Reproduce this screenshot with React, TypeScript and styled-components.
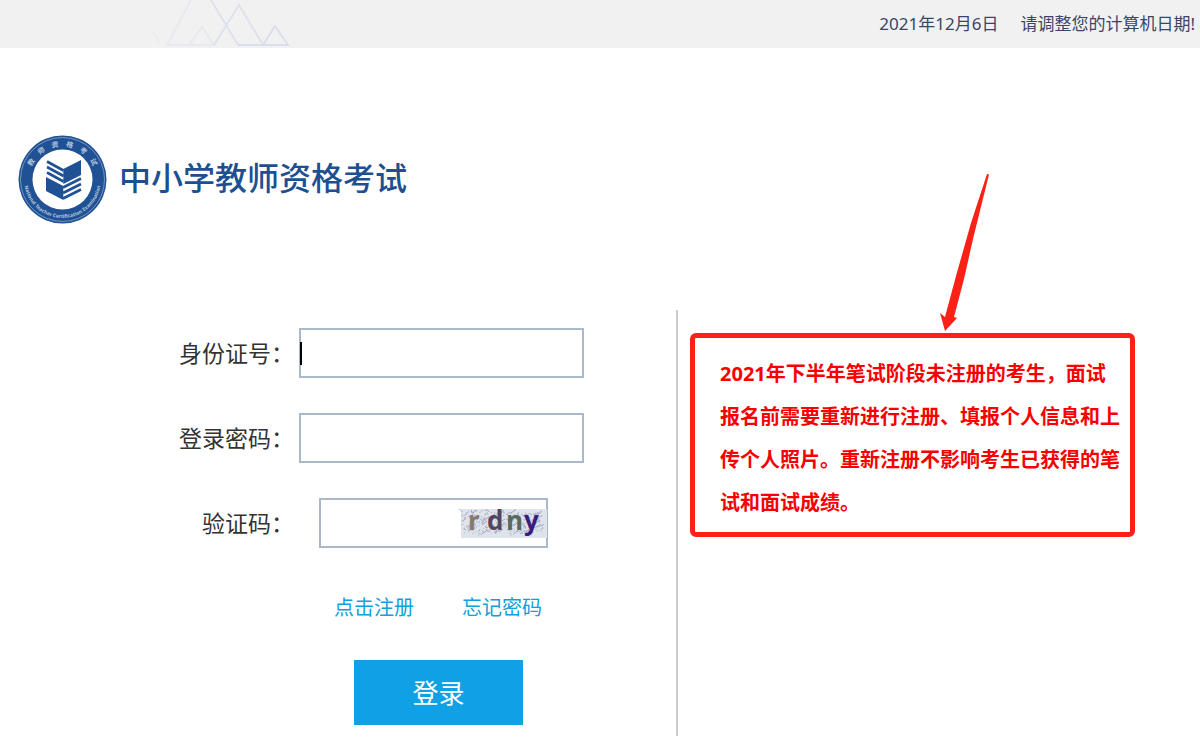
import React from "react";
import styled, { createGlobalStyle } from "styled-components";

const GlobalStyle = createGlobalStyle`
  * { box-sizing: border-box; }
  body {
    margin: 0;
    background: #fff;
    color: #333;
    font-family: "Noto Sans", "Noto Sans CJK SC", sans-serif;
  }
`;

const TopBar = styled.header`
  display: flex;
  justify-content: space-between;
  height: 48px;
  padding: 0 5px 0 150px;
  background: #f1f1f1;
`;

const DateInfo = styled.p`
  display: flex;
  gap: 22px;
  margin: 0;
  font-size: 17px;
  line-height: 48px;
  color: #3b4566;
  white-space: nowrap;
`;

const Brand = styled.div`
  display: flex;
  align-items: center;
  gap: 12px;
  padding: 87px 18px 86px;
`;

const BrandName = styled.h1`
  margin: 0;
  padding-bottom: 4px;
  font-size: 32px;
  line-height: 48px;
  font-weight: 500;
  color: #1d4f91;
`;

const Content = styled.main`
  display: grid;
  grid-template-columns: 678fr 522fr;
  margin-bottom: 20px;
`;

const LoginForm = styled.form`
  display: flex;
  flex-direction: column;
  padding: 18px 0 11px 120px;
  border-right: 2px solid #ccc;
`;

const Fields = styled.div`
  display: flex;
  flex-direction: column;
  gap: 35px;
`;

const FieldRow = styled.div`
  display: grid;
  grid-template-columns: 174px 1fr;
  column-gap: 5px;
  align-items: center;
`;

const Label = styled.label`
  text-align: right;
  font-size: 23px;
  line-height: 50px;
`;

const InputWrap = styled.div<{ $short?: boolean }>`
  position: relative;
  width: ${(p) => (p.$short ? 229 : 285)}px;
  margin-left: ${(p) => (p.$short ? 20 : 0)}px;
`;

const Input = styled.input`
  display: block;
  width: 100%;
  height: 50px;
  padding: 0 8px;
  border: 2px solid #aab8cb;
  border-radius: 0;
  background: #fff;
  font: inherit;
  font-size: 20px;
  outline: none;
`;

const Caret = styled.span`
  position: absolute;
  left: 1px;
  top: 14px;
  width: 2px;
  height: 23px;
  background: #000;
`;

const CaptchaImage = styled.svg`
  position: absolute;
  right: 1px;
  top: 11px;
  overflow: visible;
`;

const Links = styled.nav`
  display: flex;
  gap: 48px;
  margin: 45px 0 37px 214px;
`;

const TextLink = styled.a`
  font-size: 20px;
  line-height: 30px;
  color: #10a0dc;
  text-decoration: none;
`;

const SubmitButton = styled.button`
  width: 169px;
  height: 65px;
  margin-left: 234px;
  padding: 0 0 2px;
  border: 0;
  background: #0fa1e3;
  color: #fff;
  font: inherit;
  font-size: 26px;
  cursor: pointer;
`;

const NoticeArea = styled.aside`
  padding: 23px 12px 0;
`;

const Notice = styled.div`
  position: relative;
  max-width: 445px;
  padding: 14px 8px 8px 25px;
  border: 5px solid #fb2116;
  border-radius: 6px;
`;

const NoticeText = styled.p`
  margin: 0;
  font-size: 20px;
  line-height: 43px;
  font-weight: 700;
  color: #f80000;
`;

const Arrow = styled.svg`
  position: absolute;
  left: 242px;
  bottom: 100%;
  margin-bottom: 7px;
`;

const Mountains = () => (
  <svg width="150" height="48" viewBox="0 0 150 48" fill="none" strokeWidth="2" aria-hidden="true">
    <path d="M3 32 9 42" stroke="#ebecef" />
    <path d="M41 0 17 45H64L52 27 39 45" stroke="#e7e9ee" />
    <path d="M61 0 88 45M64 45 89 5 113 45" stroke="#dfe2eb" />
    <path d="M88 45H138L125 26 113 45" stroke="#dadfec" />
  </svg>
);

const Emblem = () => (
  <svg width="89" height="89" viewBox="0 0 89 89" role="img" aria-label="中小学教师资格考试">
    <defs>
      <path id="ringTop" d="M11.500 44.500A33 33 0 0 1 77.500 44.500" />
      <path id="ringBottom" d="M6 44.500A38.500 38.500 0 0 0 83 44.500" />
    </defs>
    <circle cx="44.500" cy="44.500" r="44" fill="#1f5194" />
    <circle cx="44.500" cy="44.500" r="42" fill="none" stroke="#8ba6cb" strokeWidth="0.800" />
    <circle cx="44.500" cy="44.500" r="30" fill="#fff" />
    <text fontSize="7" fontWeight="700" fill="#b4c6df" textAnchor="middle" letterSpacing="7">
      <textPath href="#ringTop" startOffset="53%">教师资格考试</textPath>
    </text>
    <text fontSize="5" fontWeight="700" fill="#b4c6df" textAnchor="middle">
      <textPath href="#ringBottom" startOffset="50%">National Teacher Certification Examination</textPath>
    </text>
    <path d="M45.300 34 63 25V40L45.300 49Z" fill="#1f5194" />
    <path d="M28 42 45.300 51V65L28 56Z" fill="#1f5194" />
    <path
      d="M29 26.500 45.500 35.500M29 32 45.500 41M29 37.500 45.500 46.500"
      stroke="#1f5194"
      strokeWidth="2.600"
    />
    <path
      d="M45 52.500 63 43.500M45 58 63 49M45 63.500 63 54.500"
      stroke="#1f5194"
      strokeWidth="2.600"
    />
  </svg>
);

const noiseColors = ["#a9b0cf", "#b9c8cd", "#c5bfd6", "#9facc4", "#bccfbf", "#a59fc4"];
const noise = Array.from({ length: 170 }, (_, i) => {
  const x = 2 + ((i * 37) % 80);
  const y = 3 + ((i * 19 + Math.floor(i / 7) * 5) % 22);
  const dx = ((i * 13) % 11) - 5;
  const dy = ((i * 7) % 9) - 4;
  return { d: `M${x} ${y}q${dx} ${dy} ${dy} ${dx / 2}`, color: noiseColors[i % 6] };
});

const Captcha = () => (
  <CaptchaImage width="86" height="29" viewBox="0 0 86 29" role="img" aria-label="验证码图片">
    <rect width="86" height="29" fill="#dfe4ec" />
    {noise.map((n, i) => (
      <path key={i} d={n.d} stroke={n.color} fill="none" />
    ))}
    <g fontFamily="Open Sans, sans-serif" fontSize="26" fontWeight="700">
      <text x="7" y="21" fill="#85796e">r</text>
      <text x="26" y="21" fill="#56445c">d</text>
      <text x="45" y="21" fill="#58695f">n</text>
      <text x="63" y="21" fill="#3b1b80">y</text>
    </g>
  </CaptchaImage>
);

export default function App() {
  return (
    <>
      <GlobalStyle />
      <TopBar>
        <Mountains />
        <DateInfo>
          <span>2021年12月6日</span>
          <span>请调整您的计算机日期!</span>
        </DateInfo>
      </TopBar>
      <Brand>
        <Emblem />
        <BrandName>中小学教师资格考试</BrandName>
      </Brand>
      <Content>
        <LoginForm onSubmit={(e) => e.preventDefault()}>
          <Fields>
            <FieldRow>
              <Label htmlFor="idNumber">身份证号：</Label>
              <InputWrap>
                <Input id="idNumber" type="text" />
                <Caret />
              </InputWrap>
            </FieldRow>
            <FieldRow>
              <Label htmlFor="password">登录密码：</Label>
              <InputWrap>
                <Input id="password" type="password" />
              </InputWrap>
            </FieldRow>
            <FieldRow>
              <Label htmlFor="captcha">验证码：</Label>
              <InputWrap $short>
                <Input id="captcha" type="text" />
                <Captcha />
              </InputWrap>
            </FieldRow>
          </Fields>
          <Links>
            <TextLink href="#register">点击注册</TextLink>
            <TextLink href="#forgot">忘记密码</TextLink>
          </Links>
          <SubmitButton type="submit">登录</SubmitButton>
        </LoginForm>
        <NoticeArea>
          <Notice>
            <Arrow width="53" height="160" viewBox="0 0 53 160" aria-hidden="true">
              <path
                d="M50 3 52 3.500 36 68 27 108 17 146 20 147 8 160 3 142 8 146 19 105 34 52Z"
                fill="#fb2116"
              />
            </Arrow>
            <NoticeText>
              2021年下半年笔试阶段未注册的考生，面试报名前需要重新进行注册、填报个人信息和上传个人照片。重新注册不影响考生已获得的笔试和面试成绩。
            </NoticeText>
          </Notice>
        </NoticeArea>
      </Content>
    </>
  );
}
